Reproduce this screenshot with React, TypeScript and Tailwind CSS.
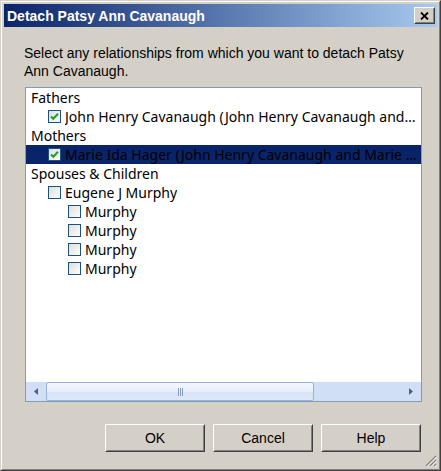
import React from "react";

type Row = {
  level: 0 | 1 | 2;
  label: string;
  box?: boolean;
  checked?: boolean;
  selected?: boolean;
};

const rows: Row[] = [
  { level: 0, label: "Fathers" },
  {
    level: 1,
    label: "John Henry Cavanaugh (John Henry Cavanaugh and Marie Ida Hager)",
    box: true,
    checked: true,
  },
  { level: 0, label: "Mothers" },
  {
    level: 1,
    label: "Marie Ida Hager (John Henry Cavanaugh and Marie Ida Hager)",
    box: true,
    checked: true,
    selected: true,
  },
  { level: 0, label: "Spouses & Children" },
  { level: 1, label: "Eugene J Murphy", box: true },
  { level: 2, label: "Murphy", box: true },
  { level: 2, label: "Murphy", box: true },
  { level: 2, label: "Murphy", box: true },
  { level: 2, label: "Murphy", box: true },
];

const indent = ["pl-[5px]", "pl-[22px]", "pl-[42px]"];

const Checkbox = ({ checked }: { checked?: boolean }) => (
  <svg width="13" height="13" viewBox="0 0 13 13" className="shrink-0">
    <defs>
      <linearGradient id="cbfill" x1="0" y1="0" x2="1" y2="1">
        <stop offset="0" stopColor="#dcdcd7" />
        <stop offset="1" stopColor="#ffffff" />
      </linearGradient>
    </defs>
    <rect x="0.5" y="0.5" width="12" height="12" fill="url(#cbfill)" stroke="#1c5180" />
    {checked && (
      <path d="M3 6.5 L5.3 8.8 L10 3.8" fill="none" stroke="#21a121" strokeWidth="2" />
    )}
  </svg>
);

const ClassicButton = ({ label }: { label: string }) => (
  <button className="w-[100px] h-[28px] border border-t-white border-l-white border-r-[#404040] border-b-[#404040] bg-[#d4d0c8]">
    <span className="flex h-full w-full items-center justify-center border border-t-[#d4d0c8] border-l-[#d4d0c8] border-r-[#808080] border-b-[#808080] text-[14px] text-black">
      {label}
    </span>
  </button>
);

export default function App() {
  return (
    <div
      className="w-[441px] h-[471px] border border-t-[#d4d0c8] border-l-[#d4d0c8] border-r-[#404040] border-b-[#404040] bg-[#d4d0c8]"
      style={{ fontFamily: '"Liberation Sans", Arial, sans-serif' }}
    >
      <div className="flex h-full flex-col border border-t-white border-l-white border-r-[#808080] border-b-[#808080] p-[2px]">
        {/* title bar */}
        <div className="flex h-[23px] shrink-0 items-center justify-between bg-[linear-gradient(to_right,#0a246a,#a6caf0)] pl-[3px] pr-[2px]">
          <span className="text-[14px] font-bold text-white leading-none">
            Detach Patsy Ann Cavanaugh
          </span>
          <div className="flex h-[17px] w-[21px] border border-t-white border-l-white border-r-[#404040] border-b-[#404040] bg-[#d4d0c8]">
            <div className="flex h-full w-full items-center justify-center border border-t-[#d4d0c8] border-l-[#d4d0c8] border-r-[#808080] border-b-[#808080]">
              <svg width="9" height="8" viewBox="0 0 9 8">
                <path d="M1 0.5 L8 7.5 M8 0.5 L1 7.5" stroke="#000" strokeWidth="1.8" />
              </svg>
            </div>
          </div>
        </div>

        {/* message */}
        <p className="mt-[18px] ml-[20px] mr-[15px] text-[14px] leading-[17.5px] text-black">
          Select any relationships from which you want to detach Patsy Ann Cavanaugh.
        </p>

        {/* list */}
        <div className="mt-[7px] ml-[21px] mr-[15px] flex h-[315px] flex-col border border-[#7f9db9] bg-white">
          <div
            className="flex-1 text-[14px] text-black"
            style={{ fontFamily: '"Noto Sans", "Open Sans", sans-serif' }}
          >
            {rows.map((r, i) => (
              <div
                key={i}
                className={`flex h-[19px] items-center pr-[4px] ${indent[r.level]} ${
                  r.selected ? "bg-[#0a246a]" : ""
                }`}
              >
                {r.box && <Checkbox checked={r.checked} />}
                <span
                  className={`truncate leading-[19px] ${r.box ? "ml-[4px]" : ""}`}
                >
                  {r.label}
                </span>
              </div>
            ))}
          </div>
          {/* horizontal scrollbar */}
          <div className="flex h-[19px] shrink-0 bg-[#d0dff3]">
            <div className="flex w-[20px] items-center justify-center">
              <svg width="4" height="7" viewBox="0 0 4 7">
                <path d="M4 0 L0 3.5 L4 7 Z" fill="#4d6185" />
              </svg>
            </div>
            <div className="flex w-[268px] items-center justify-center rounded-[2px] border border-[#98b1d8] bg-[linear-gradient(to_bottom,#f3f6fd_0%,#e8effb_50%,#d8e4f7_52%,#dde8f8_100%)]">
              <svg width="5" height="8" viewBox="0 0 5 8">
                <path d="M0.5 0 V8 M2.5 0 V8 M4.5 0 V8" stroke="#8a9fc0" strokeWidth="1" />
              </svg>
            </div>
            <div className="flex-1" />
            <div className="flex w-[20px] items-center justify-center">
              <svg width="4" height="7" viewBox="0 0 4 7">
                <path d="M0 0 L4 3.5 L0 7 Z" fill="#4d6185" />
              </svg>
            </div>
          </div>
        </div>

        {/* buttons */}
        <div className="mt-[22px] mr-[16px] flex justify-end gap-[8px]">
          <ClassicButton label="OK" />
          <ClassicButton label="Cancel" />
          <ClassicButton label="Help" />
        </div>

        {/* size grip */}
        <div className="flex flex-1 items-end justify-end">
          <svg width="12" height="12" viewBox="0 0 12 12">
            <path d="M11 1 L1 11 M11 5 L5 11 M11 9 L9 11" stroke="#808080" strokeWidth="1.2" />
            <path d="M11.8 1.8 L1.8 11.8 M11.8 5.8 L5.8 11.8 M11.8 9.8 L9.8 11.8" stroke="#ffffff" strokeWidth="0.8" />
          </svg>
        </div>
      </div>
    </div>
  );
}
